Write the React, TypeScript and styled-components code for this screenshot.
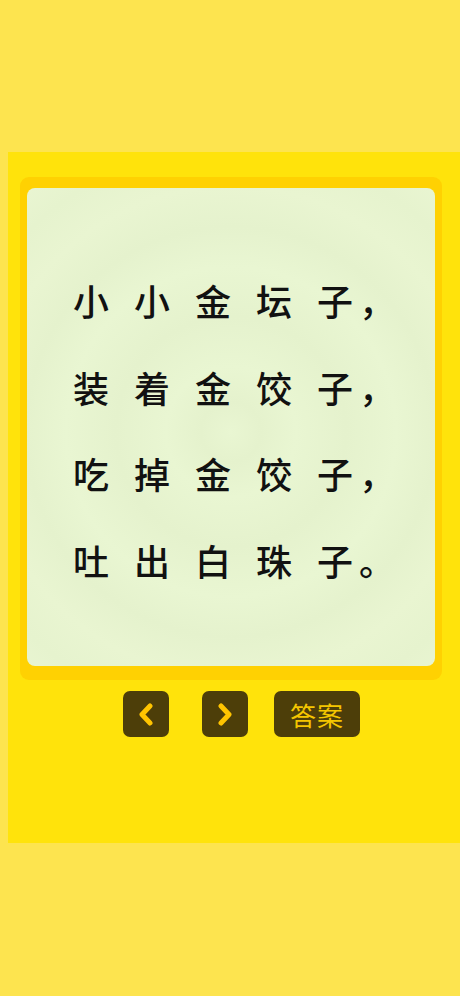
import styled, { createGlobalStyle } from 'styled-components';

const GlobalStyle = createGlobalStyle`
  html, body {
    margin: 0;
    padding: 0;
    background: #fde44f;
  }
  body {
    font-family: "Noto Sans CJK SC", "Noto Sans", sans-serif;
  }
`;

const Page = styled.div`
  width: 460px;
  height: 996px;
  padding-top: 152px;
  box-sizing: border-box;
  overflow: hidden;
`;

const Panel = styled.div`
  margin-left: 8px;
  height: 691px;
  background: #ffe30b;
  padding: 25px 18px 0 12px;
  box-sizing: border-box;
`;

const Frame = styled.div`
  background: #ffd102;
  border-radius: 9px;
  padding: 11px 7px 14px 7px;
`;

const Card = styled.div`
  height: 478px;
  box-sizing: border-box;
  border-radius: 8px;
  padding: 69px 0 0 46px;
  background: radial-gradient(
    circle at 50% 51%,
    #e9f6d2 0px,
    #e5f2cd 30px,
    #e9f6d2 65px,
    #e5f2cd 115px,
    #e9f6d2 165px,
    #e5f2cd 205px,
    #e9f5d1 245px,
    #e6f3ce 285px,
    #eaf6d3 330px
  );
`;

const Line = styled.div`
  font-size: 36px;
  line-height: 86.5px;
  height: 86.5px;
  font-weight: 500;
  color: #111;
  letter-spacing: 25px;
  white-space: nowrap;
`;

const Tail = styled.span`
  letter-spacing: 6px;
`;

const Controls = styled.div`
  display: flex;
  align-items: center;
  padding: 11px 0 0 103px;
`;

const NavButton = styled.div<{ $gap: number }>`
  width: 46px;
  height: 46px;
  border-radius: 7px;
  background: #4d3e09;
  display: flex;
  align-items: center;
  justify-content: center;
  margin-right: ${(p) => p.$gap}px;
`;

const AnswerButton = styled.div`
  width: 86px;
  height: 46px;
  border-radius: 7px;
  background: #4d3e09;
  color: #f5c600;
  font-size: 26px;
  display: flex;
  align-items: center;
  justify-content: center;
  letter-spacing: 1px;
`;

const lines = ['小小金坛子，', '装着金饺子，', '吃掉金饺子，', '吐出白珠子。'];

function Chevron({ dir }: { dir: 'left' | 'right' }) {
  const d = dir === 'left' ? 'M14 3 L6 11.5 L14 20' : 'M6 3 L14 11.5 L6 20';
  return (
    <svg width="20" height="23" viewBox="0 0 20 23">
      <path d={d} fill="none" stroke="#ffc400" strokeWidth="5" strokeLinecap="round" strokeLinejoin="round" />
    </svg>
  );
}

export default function App() {
  return (
    <Page>
      <GlobalStyle />
      <Panel>
        <Frame>
          <Card>
            {lines.map((l) => (
              <Line key={l}>
                {l.slice(0, -2)}
                <Tail>{l.slice(-2)}</Tail>
              </Line>
            ))}
          </Card>
        </Frame>
        <Controls>
          <NavButton $gap={33}>
            <Chevron dir="left" />
          </NavButton>
          <NavButton $gap={26}>
            <Chevron dir="right" />
          </NavButton>
          <AnswerButton>答案</AnswerButton>
        </Controls>
      </Panel>
    </Page>
  );
}
